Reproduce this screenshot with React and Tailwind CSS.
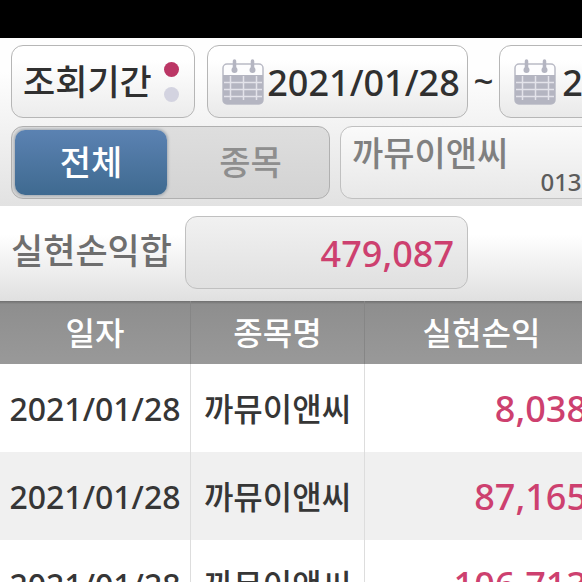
import React, { useState } from 'react';

const trades = [
  { id: 1, date: '2021/01/28', name: '까뮤이앤씨', profit: '8,038' },
  { id: 2, date: '2021/01/28', name: '까뮤이앤씨', profit: '87,165' },
  { id: 3, date: '2021/01/28', name: '까뮤이앤씨', profit: '106,713' },
];

function CalendarIcon() {
  return (
    <svg width="42" height="48" viewBox="0 0 42 48" className="shrink-0" aria-hidden="true">
      <rect x="1" y="6" width="40" height="40" rx="4" fill="#fdfdfe" stroke="#b9bac5" strokeWidth="1.5" />
      <path d="M1 17h40v25a4 4 0 0 1-4 4H5a4 4 0 0 1-4-4z" fill="#b4b5c1" />
      <path d="M2 24.500h38M2 31.500h38M2 38.500h38M8.500 18v24M21.500 18v24M34.500 18v24" stroke="#e3e3ea" strokeWidth="1.500" />
      <path d="M12.500 3v9M30.500 3v9" stroke="#b4b5c1" strokeWidth="3.500" strokeLinecap="round" />
      <circle cx="12.500" cy="12" r="3" fill="#b4b5c1" />
      <circle cx="30.500" cy="12" r="3" fill="#b4b5c1" />
    </svg>
  );
}

function DateField({ label, value, onChange, className }) {
  return (
    <label className={`flex shrink-0 items-center rounded-xl border border-[#b6b6b6] bg-linear-to-b from-white from-20% to-[#e9e9e9] pl-[14px] pr-1 ${className}`}>
      <CalendarIcon />
      <input
        type="text"
        aria-label={label}
        value={value}
        onChange={(e) => onChange(e.target.value)}
        className="w-full min-w-0 bg-transparent pt-[2px] text-center text-[36px] font-medium text-[#303030] outline-none"
      />
    </label>
  );
}

function App() {
  const [from, setFrom] = useState('2021/01/28');
  const [to, setTo] = useState('2021/01/28');
  const [mode, setMode] = useState('all');

  const tab = (active) =>
    active
      ? 'bg-linear-to-b from-[#5b82b2] to-[#3f6a90] text-white shadow-[0_0_3px_1px_#a0a8b0]'
      : 'text-[#8e8e8e]';

  return (
    <div className="h-screen overflow-hidden bg-white font-['Noto_Sans','Noto_Sans_CJK_KR',sans-serif] font-medium">
      <div className="h-[38px] bg-black" />

      {/* Search filters */}
      <section className="flex flex-col gap-2 bg-linear-to-b from-[#fefefe] from-20% to-[#e2e2e2] px-[11px] py-[7px]">
        <div className="flex h-[73px]">
          <button className="flex w-[184px] shrink-0 items-center justify-between rounded-xl border border-[#b6b6b6] bg-linear-to-b from-white from-20% to-[#ececec] pl-[11px] pr-[15px] text-[35px] text-[#303030]">
            <span className="pt-[2px]">조회기간</span>
            <span className="flex flex-col gap-[10px]">
              <span className="size-[15px] rounded-full bg-[#bb3665]" />
              <span className="size-[15px] rounded-full bg-[#d3d3e0]" />
            </span>
          </button>
          <DateField label="시작일" value={from} onChange={setFrom} className="ml-3 w-[261px]" />
          <span className="flex w-[31px] shrink-0 items-center justify-center text-[35px] text-[#303030]">~</span>
          <DateField label="종료일" value={to} onChange={setTo} className="w-[267px]" />
        </div>

        <div className="flex h-[73px] gap-[10px]">
          <div className="flex w-[319px] shrink-0 rounded-xl border border-[#b0b0b0] bg-linear-to-b from-[#dedede] to-[#d3d3d3] p-[3px] text-[34px]">
            <button onClick={() => setMode('all')} className={`w-[152px] rounded-[10px] ${tab(mode === 'all')}`}>
              전체
            </button>
            <button onClick={() => setMode('stock')} className={`ml-2 flex-1 rounded-[10px] ${tab(mode === 'stock')}`}>
              종목
            </button>
          </div>
          <button className="flex w-[420px] shrink-0 rounded-xl border border-[#c0c0c0] bg-linear-to-b from-[#fafafa] to-[#e8e8e8] pl-[11px] text-left">
            <span className="text-[34px] leading-[52px] text-[#808080]">까뮤이앤씨</span>
            <span className="ml-8 self-end text-2xl text-[#5c5c5c]">013700</span>
          </button>
        </div>
      </section>

      {/* Realized profit total */}
      <section className="flex h-[95px] items-start bg-linear-to-b from-white from-30% to-[#e0e0e0] pl-[11px] pt-[10px]">
        <span id="total-label" className="w-[174px] shrink-0 text-[35px] leading-[70px] text-[#6e6e6e]">
          실현손익합
        </span>
        <output
          aria-labelledby="total-label"
          className="flex h-[73px] w-[283px] items-center justify-end rounded-xl border border-[#c0c0c0] bg-linear-to-b from-[#f1f1f1] to-[#e0e0e0] pr-[13px] pt-[2px] text-[36px] text-[#cd406f]"
        >
          479,087
        </output>
      </section>

      <table className="w-[598px] table-fixed border-separate border-spacing-0">
        <colgroup>
          <col className="w-[191px]" />
          <col className="w-[174px]" />
          <col />
        </colgroup>
        <thead>
          <tr className="h-[63px] bg-[#979797] bg-linear-to-b from-[#6f6f6f] via-[#8e8e8e] via-5% to-[#999999] text-[32px] leading-[48px] text-white">
            <th className="border-r border-[#868686] p-0 font-medium">일자</th>
            <th className="border-r border-[#868686] p-0 font-medium">종목명</th>
            <th className="p-0 font-medium">실현손익</th>
          </tr>
        </thead>
        <tbody>
          {trades.map((trade) => (
            <tr key={trade.id} className="h-[88px] text-[32px] text-[#363636] even:bg-[#f0f0f0]">
              <td className="border-r border-[#dddddd] p-0 pt-[2px] text-center">{trade.date}</td>
              <td className="border-r border-[#dddddd] p-0 pt-[2px] text-center">{trade.name}</td>
              <td className="p-0 pt-[2px] pr-[11px] text-right text-[36px] text-[#cd406f]">{trade.profit}</td>
            </tr>
          ))}
        </tbody>
      </table>
    </div>
  );
}

export default App;
